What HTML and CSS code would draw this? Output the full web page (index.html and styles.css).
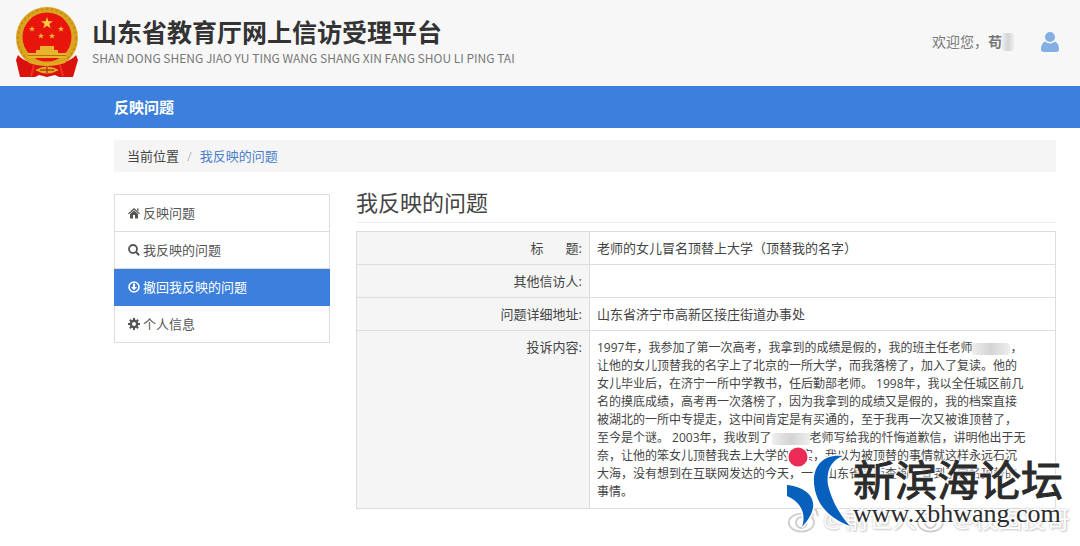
FILE: index.html
```html
<!DOCTYPE html>
<html lang="zh-CN">
<head>
  <meta charset="UTF-8">
  <title>山东省教育厅网上信访受理平台</title>
  <meta name="viewport" content="width=device-width, initial-scale=1">
  <link rel="stylesheet" href="styles.css">
</head>
<body>
  <header class="header">
    <svg class="emblem" viewBox="0 0 64 70" aria-hidden="true">
      <circle cx="32" cy="31" r="31" fill="#dba520"/>
      <circle cx="32" cy="31" r="29" fill="none" stroke="#c98f18" stroke-width="2" stroke-dasharray="3 2"/>
      <circle cx="32" cy="30" r="24.5" fill="#e8150c"/>
      <path d="M32 10l1.400 4.300h4.500l-3.600 2.700 1.400 4.300-3.700-2.600-3.700 2.600 1.400-4.300-3.600-2.700h4.500z" fill="#f6cf45"/>
      <g fill="#f0b93a">
        <path id="star" d="M17 19l.8 2h2.200l-1.700 1.300.7 2.200-2-1.300-2 1.300.7-2.200-1.700-1.300h2.200z"/>
        <use href="#star" x="9" y="7"/>
        <use href="#star" x="20" y="7"/>
        <use href="#star" x="29" y="0"/>
      </g>
      <path d="M25 39h14v4h4v3h8v5H13v-5h8v-3h4z" fill="#e9b32c"/>
      <path d="M13 48h38v1H13z" fill="#b9720f"/>
      <path d="M3 48c8 9 17 8 29 8s21 1 29-8l2 5-5 17H44l-4-2-8 2-8-2-4 2H5L1 53z" fill="#d9120d"/>
      <path d="M10 51c7 4 14 5 22 5s15-1 22-5l-4 5c-11 4-25 4-36 0z" fill="#e3a824"/>
      <path d="M20 63q12-7 24 0-12 7-24 0z" fill="#e3a824"/>
      <path d="M25 63h14M32 60v6" stroke="#b3400d" stroke-width="1.500"/>
      <path d="M19 58l-3 11M45 58l3 11" stroke="#f03422" stroke-width="2"/>
    </svg>
    <div class="brand">
      <h1>山东省教育厅网上信访受理平台</h1>
      <p>SHAN DONG SHENG JIAO YU TING WANG SHANG XIN FANG SHOU LI PING TAI</p>
    </div>
    <div class="user">
      <span>欢迎您，<b>苟</b></span><span class="smudge smudge-user"></span>
      <svg class="avatar" viewBox="0 0 18 20" aria-hidden="true">
        <circle cx="9" cy="5" r="5"/>
        <path d="M4 9.500q5 4 10 0 4 2 4 8 0 2.500-3 2.500H3q-3 0-3-2.500 0-6 4-8z"/>
      </svg>
    </div>
  </header>

  <nav class="navbar"><a href="#">反映问题</a></nav>

  <div class="container">
    <div class="breadcrumb">
      <span>当前位置</span><span class="slash">/</span><a href="#">我反映的问题</a>
    </div>

    <div class="columns">
      <nav class="menu">
        <a href="#">
          <svg viewBox="0 0 12 12"><path d="M6 1l6 5.500-.8.800L6 2.700.8 7.300 0 6.500zM9 1.500h1.500v3L9 3zM2 7l4-3.400L10 7v4.500H7V8H5v3.500H2z"/></svg>
          反映问题
        </a>
        <a href="#">
          <svg viewBox="0 0 12 12"><circle cx="5" cy="5" r="4" fill="none" stroke="currentColor" stroke-width="1.800"/><path d="M8 8l3.200 3.200" stroke="currentColor" stroke-width="2"/></svg>
          我反映的问题
        </a>
        <a href="#" class="active">
          <svg viewBox="0 0 12 12"><circle cx="6" cy="6" r="5" fill="none" stroke="currentColor" stroke-width="1.600"/><path d="M5 2.500h2V6h2L6 9.300 3 6h2z"/></svg>
          撤回我反映的问题
        </a>
        <a href="#">
          <svg viewBox="0 0 12 12"><circle cx="6" cy="6" r="3.200" fill="none" stroke="currentColor" stroke-width="2.400"/><path d="M6 0v2.500M6 9.500V12M0 6h2.500M9.500 6H12M1.800 1.800l1.700 1.700M8.500 8.500l1.700 1.700M1.800 10.200l1.700-1.700M8.500 3.500l1.700-1.700" stroke="currentColor" stroke-width="2"/></svg>
          个人信息
        </a>
      </nav>

      <main class="content">
        <h2>我反映的问题</h2>
        <table class="detail">
          <tr>
            <th scope="row"><span class="wide">标</span>题:</th>
            <td>老师的女儿冒名顶替上大学（顶替我的名字）</td>
          </tr>
          <tr>
            <th scope="row">其他信访人:</th>
            <td></td>
          </tr>
          <tr>
            <th scope="row">问题详细地址:</th>
            <td>山东省济宁市高新区接庄街道办事处</td>
          </tr>
          <tr>
            <th scope="row">投诉内容:</th>
            <td class="story">
              1997年，我参加了第一次高考，我拿到的成绩是假的，我的班主任老师<span class="smudge"></span>，<br>
              让他的女儿顶替我的名字上了北京的一所大学，而我落榜了，加入了复读。他的<br>
              女儿毕业后，在济宁一所中学教书，任后勤部老师。 1998年，我以全任城区前几<br>
              名的摸底成绩，高考再一次落榜了，因为我拿到的成绩又是假的，我的档案直接<br>
              被湖北的一所中专提走，这中间肯定是有买通的，至于我再一次又被谁顶替了，<br>
              至今是个谜。 2003年，我收到了<span class="smudge"></span>老师写给我的忏悔道歉信，讲明他出于无<br>
              奈，让他的笨女儿顶替我去上大学的事实，我以为被顶替的事情就这样永远石沉<br>
              大海，没有想到在互联网发达的今天，一个山东省学历查询，查到了冒名顶替的<br>
              事情。
            </td>
          </tr>
        </table>
      </main>
    </div>
  </div>

  <div class="weibo">
    <svg viewBox="0 0 40 32" aria-hidden="true"><ellipse cx="16" cy="20" rx="14" ry="10"/><circle cx="16" cy="20" r="6"/><path d="M25 3q9 0 9 10M25 8q4 0 4 5"/></svg>
    <span>@前世人</span>
    <svg viewBox="0 0 40 32" aria-hidden="true"><ellipse cx="16" cy="20" rx="14" ry="10"/><circle cx="16" cy="20" r="6"/></svg>
    <span>@校园投哥</span>
  </div>

  <div class="forum">
    <svg viewBox="0 0 66 82" aria-hidden="true">
      <circle cx="11" cy="10" r="9.500" fill="#ec2b57" stroke="#fff" stroke-width="3" paint-order="stroke"/>
      <g fill="#0860bd" stroke="#fff" stroke-width="3" paint-order="stroke">
        <path d="M0 38C20 40 39 54 15 80C20 65 12 54 0 49z"/>
        <path d="M56 9C33 6 22 24 29 47C34 63 47 73 63 79C51 66 44 51 41 38C39 24 44 13 56 9z"/>
      </g>
    </svg>
    <div class="forum-text">
      <strong>新滨海论坛</strong>
      <span>www.xbhwang.com</span>
    </div>
  </div>
</body>
</html>
```

FILE: styles.css
```css
* {
  box-sizing: border-box;
}

body {
  font-family: 'Open Sans', 'Noto Sans CJK SC', sans-serif;
  font-size: 13px;
  line-height: 18px;
  margin: 0;
  color: #444;
  background: #fff;
}

a {
  color: #4a7fcb;
  text-decoration: none;
}

h1,
h2,
p {
  margin: 0;
}

.header {
  display: flex;
  align-items: center;
  height: 86px;
  padding: 0 20px 2px 15px;
  background: #f7f7f7;
}

.emblem {
  width: 64px;
  height: 70px;
  margin-right: 13px;
}

.brand h1 {
  font-size: 25px;
  line-height: 28px;
  margin-bottom: 3px;
  color: #333;
}

.brand p {
  font-family: 'Noto Sans CJK SC', sans-serif;
  font-size: 12px;
  color: #777;
}

.user {
  display: flex;
  align-items: center;
  margin-left: auto;
  font-size: 14px;
  color: #777;
}

.avatar {
  width: 20px;
  height: 20px;
  margin-left: 26px;
  fill: #83afe4;
}

.smudge {
  display: inline-block;
  width: 38px;
  height: 12px;
  vertical-align: middle;
  background: linear-gradient(to right, #eee, #d4d4d4, #eee);
  border-radius: 3px;
}

.smudge-user {
  width: 12px;
  height: 18px;
}

.navbar {
  padding: 0 114px;
  background: #3c7fdc;
}

.navbar a {
  display: block;
  font-size: 15px;
  font-weight: bold;
  line-height: 42px;
  color: #fff;
}

.container {
  padding: 12px 24px 0 114px;
}

.breadcrumb {
  padding: 7px 13px;
  background: #f5f5f5;
}

.slash {
  margin: 0 8px;
  color: #bbb;
}

.columns {
  display: flex;
  align-items: flex-start;
  gap: 26px;
  padding-top: 18px;
}

.menu {
  flex: 0 0 216px;
  margin-top: 4px;
  border: 1px solid #ddd;
}

.menu a {
  display: flex;
  align-items: center;
  gap: 3px;
  height: 37px;
  padding: 0 13px;
  color: #555;
  border-bottom: 1px solid #ddd;
}

.menu a:last-child {
  height: 36px;
  border-bottom: none;
}

.menu a.active {
  margin: 0 -1px;
  padding: 0 14px;
  color: #fff;
  background: #3c7fdc;
  border-color: #3c7fdc;
}

.menu svg {
  width: 12px;
  height: 12px;
  fill: currentColor;
}

.content {
  flex: 1;
}

.content h2 {
  font-size: 22px;
  font-weight: normal;
  line-height: 24px;
  padding-bottom: 8px;
  margin-bottom: 8px;
  border-bottom: 1px solid #eee;
}

.detail {
  width: 100%;
  border-collapse: collapse;
}

.detail th,
.detail td {
  height: 33px;
  padding: 7px;
  border: 1px solid #ddd;
  vertical-align: top;
}

.detail th {
  width: 233px;
  font-weight: normal;
  text-align: right;
  background: #f5f5f5;
}

.wide {
  margin-right: 22px;
}

.detail .story {
  font-size: 12px;
  padding-top: 8px;
  white-space: nowrap;
}

/* watermarks over the bottom right corner */
.weibo {
  position: absolute;
  right: 10px;
  top: 502px;
  display: flex;
  align-items: center;
  font-size: 24px;
  line-height: 34px;
  color: #fff;
  text-shadow: 0 0 2px #bbb, 1px 1px 2px #ccc;
}

.weibo svg {
  width: 36px;
  height: 30px;
  fill: none;
  stroke: #ccc;
  stroke-width: 2;
}

.forum {
  position: absolute;
  right: 17px;
  top: 447px;
  display: flex;
}

.forum svg {
  width: 66px;
  height: 82px;
  overflow: visible;
}

.forum-text {
  display: flex;
  flex-direction: column;
  padding-top: 12px;
  color: #2b2b2b;
  text-shadow: 0 0 2px #fff, 0 0 2px #fff, 0 0 3px #fff, 0 0 4px #fff, 2px 0 2px #fff, -2px 0 2px #fff;
}

.forum-text strong {
  font-size: 42px;
  font-weight: normal;
  line-height: 42px;
  -webkit-text-stroke: 1px #2b2b2b;
}

.forum-text span {
  font-family: 'Liberation Serif', serif;
  font-size: 26px;
  line-height: 26px;
}
```
